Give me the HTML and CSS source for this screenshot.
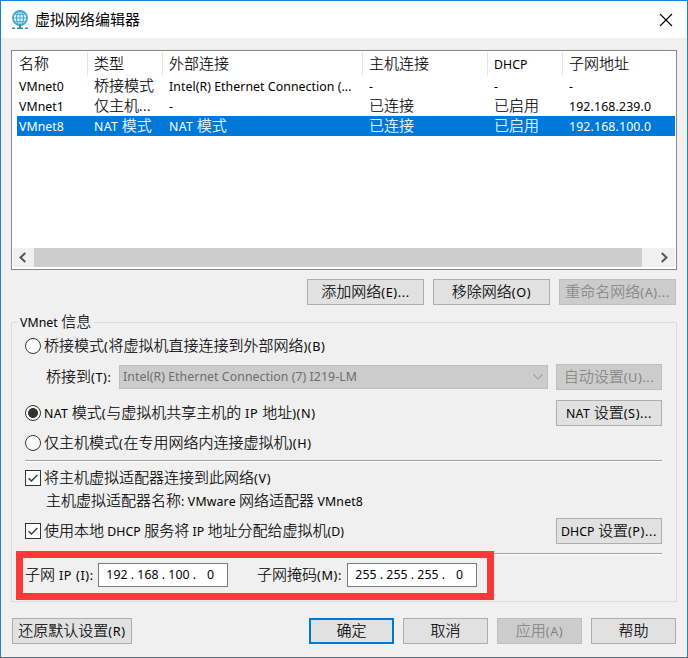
FILE: index.html
```html
<!DOCTYPE html>
<html lang="zh-CN">
<head>
<meta charset="utf-8">
<title>虚拟网络编辑器</title>
<link rel="stylesheet" href="styles.css">
</head>
<body>
<main class="window">
  <header class="titlebar">
    <svg class="app-icon" width="18" height="20" viewBox="0 0 18 20" fill="none">
      <circle cx="9" cy="8" r="7.1" fill="#e9f7fc" stroke="#41aad0" stroke-width="1.8"/>
      <ellipse cx="9" cy="8" rx="3.5" ry="7.2" stroke="#41aad0" stroke-width="1.2"/>
      <path d="M9 1v14M2 8h14M3 4.3h12M3 11.7h12" stroke="#41aad0" stroke-width="1"/>
      <path d="M9 15v3" stroke="#3c8d8c" stroke-width="2"/>
      <path d="M1 18.3h3M6 18.3h6M14 18.3h3" stroke="#3c8d8c" stroke-width="1.5"/>
    </svg>
    <h1 class="title">虚拟网络编辑器</h1>
    <svg class="close" width="14" height="14" viewBox="0 0 14 14"><path d="M1 1l12 12M13 1L1 13" stroke="#000" stroke-width="1.1"/></svg>
  </header>

  <section class="list">
    <div class="row head"><span>名称</span><span>类型</span><span>外部连接</span><span>主机连接</span><span><i>DHCP</i></span><span>子网地址</span></div>
    <div class="row"><span><i>VMnet0</i></span><span>桥接模式</span><span><i>Intel(R) Ethernet Connection (...</i></span><span><i>-</i></span><span><i>-</i></span><span><i>-</i></span></div>
    <div class="row"><span><i>VMnet1</i></span><span>仅主机<i class="key">...</i></span><span><i>-</i></span><span>已连接</span><span>已启用</span><span><i class="addr">192.168.239.0</i></span></div>
    <div class="row selected"><span><i>VMnet8</i></span><span><i class="nat-word">NAT </i>模式</span><span><i class="nat-word">NAT </i>模式</span><span>已连接</span><span>已启用</span><span><i class="addr">192.168.100.0</i></span></div>
    <div class="scrollbar">
      <svg width="21" height="19" viewBox="0 0 21 19"><path d="M12.3 5L7.5 9.5l4.8 4.5" fill="none" stroke="#555" stroke-width="2"/></svg>
      <div class="thumb"></div>
      <svg width="33" height="19" viewBox="0 0 33 19"><path d="M19.7 5l4.8 4.5-4.8 4.5" fill="none" stroke="#555" stroke-width="2"/></svg>
    </div>
  </section>

  <div class="actions">
    <button class="btn">添加网络<i class="key">(E)...</i></button>
    <button class="btn">移除网络<i class="key">(O)</i></button>
    <button class="btn" disabled>重命名网络<i class="key">(A)...</i></button>
  </div>

  <section class="group">
    <div class="legend"><i>VMnet </i>信息</div>
    <div class="line bridge"><span class="radio"></span><span>桥接模式<i class="key">(</i>将虚拟机直接连接到外部网络<i class="key">)(B)</i></span></div>
    <div class="line adapter">
      <span class="adapter-label">桥接到<i class="key">(T):</i></span>
      <div class="combo"><i>Intel(R) Ethernet Connection (7) I219-LM</i>
        <svg width="12" height="8" viewBox="0 0 12 8"><path d="M1.5 1.5L6 6l4.500-4.500" fill="none" stroke="#a0a0a0" stroke-width="1.1"/></svg></div>
      <button class="btn side" disabled>自动设置<i class="key">(U)...</i></button>
    </div>
    <div class="line nat"><span class="radio on"></span><span><i class="nat-word">NAT </i>模式<i class="key">(</i>与虚拟机共享主机的<i class="key"> IP </i>地址<i class="key">)(N)</i></span><button class="btn side"><i class="nat-word">NAT </i>设置<i class="key">(S)...</i></button></div>
    <div class="line host"><span class="radio"></span><span>仅主机模式<i class="key">(</i>在专用网络内连接虚拟机<i class="key">)(H)</i></span></div>
    <div class="rule rule-a"></div>
    <div class="line connect"><svg class="check" viewBox="0 0 16 16"><path d="M3 8.200l3.200 3.200L13 4.600"/></svg><span>将主机虚拟适配器连接到此网络<i class="key">(V)</i></span></div>
    <div class="line name"><span>主机虚拟适配器名称<i class="vendor">: VMware </i>网络适配器<i class="vendor"> VMnet8</i></span></div>
    <div class="line dhcp"><svg class="check" viewBox="0 0 16 16"><path d="M3 8.200l3.200 3.200L13 4.600"/></svg><span>使用本地<i> DHCP </i>服务将<i> IP </i>地址分配给虚拟机<i>(D)</i></span><button class="btn side"><i>DHCP </i>设置<i class="key">(P)...</i></button></div>
    <div class="rule rule-b"></div>
    <div class="line subnet">
      <span class="ip-label">子网<i class="key"> IP (I):</i></span>
      <div class="ip"><b>192</b><em>.</em><b>168</b><em>.</em><b>100</b><em>.</em><b>0</b></div>
      <span class="mask-label">子网掩码<i class="key">(M):</i></span>
      <div class="ip"><b>255</b><em>.</em><b>255</b><em>.</em><b>255</b><em>.</em><b>0</b></div>
    </div>
    <div class="highlight"></div>
  </section>

  <footer class="footer">
    <button class="btn restore">还原默认设置<i class="key">(R)</i></button>
    <button class="btn primary">确定</button>
    <button class="btn">取消</button>
    <button class="btn" disabled>应用<i class="key">(A)</i></button>
    <button class="btn">帮助</button>
  </footer>
</main>
</body>
</html>
```
FILE: styles.css
```css
* { box-sizing: border-box; }
body { margin: 0; }
.window {
  width: 688px; height: 658px; border: 1px solid #1883d7; background: #f0f0f0;
  font: 300 15px/20px "Noto Sans CJK SC", sans-serif; color: #000; overflow: hidden;
  -webkit-text-stroke: 0.15px currentColor;
}
i, b, em { font: 400 12.3px/18px "Noto Sans", sans-serif; white-space: pre; letter-spacing: 0.07px; -webkit-text-stroke: 0; }
.key { font-size: 12.7px; letter-spacing: 0.6px; }
.nat-word { letter-spacing: 0.35px; }
.addr { letter-spacing: 0.15px; }
.vendor { letter-spacing: 0.17px; }
.titlebar { height: 37px; background: #fff; display: flex; align-items: center; padding: 0 14px 0 10px; }
.app-icon { margin-right: 6px; }
.title { margin: 0 0 2px; font: 400 15px/20px "Noto Sans CJK SC", sans-serif; flex: 1; -webkit-text-stroke: 0; }

.list {
  margin: 12px 10px 0; width: 666px; height: 220px; border: 1px solid #828790; background: #fff;
  padding: 1px 1px 2px 1px; display: flex; flex-direction: column;
}
.row { display: grid; grid-template-columns: 71px 75px 200px 125px 75px 1fr; height: 20px; margin-left: 4px; }
.row span { padding-left: 2px; white-space: nowrap; height: 20px; line-height: 18px; }
.row span + span { padding-left: 6px; }
.row.head { height: 24px; }
.row.head span { height: 24px; line-height: 21px; border-right: 1px solid #e5e5e5; }
.row.head span:last-child { border: 0; }
.selected { background: #0078d7; color: #fff; }
.scrollbar { margin-top: auto; height: 19px; display: flex; background: #f0f0f0; }
.thumb { flex: 1; background: #cdcdcd; }

.btn {
  height: 26px; padding: 0 0 2px; border: 1px solid #adadad; background: #e1e1e1; color: #000;
  font: 300 15px/20px "Noto Sans CJK SC", sans-serif; white-space: nowrap;
  -webkit-text-stroke: 0.15px currentColor;
}
.btn:disabled { background: #ccc; border-color: #bfbfbf; color: #838383; }
.actions { display: flex; justify-content: flex-end; gap: 9px; margin: 9px 11px 0 0; }
.actions .btn { width: 117px; }

.group { position: relative; margin: 17px 10px 0; width: 666px; height: 280px; border: 1px solid #dcdcdc; padding: 0 14px 0 13px; }
.legend { width: max-content; height: 20px; line-height: 18px; margin: -11px 0 0 -7px; padding: 0 3px 0 2px; background: #f0f0f0; }
.line { display: flex; align-items: center; height: 24px; white-space: nowrap; }
.line > span { padding-bottom: 2px; }
.radio { width: 16px; height: 16px; border: 1px solid #333; border-radius: 50%; background: #fff; margin-right: 3px; flex: none; }
.radio.on { background: radial-gradient(circle, #333 4.600px, #fff 5.300px) border-box; }
.bridge { margin-top: 2px; }
.adapter { height: 26px; margin-top: 6px; padding-left: 21px; }
.adapter-label { width: 73px; }
.combo { width: 429px; height: 24px; border: 1px solid #bfbfbf; background: #ccc; color: #6d6d6d; display: flex; align-items: center; justify-content: space-between; padding: 0 3px; }
.side { width: 106px; margin-left: auto; flex: none; }
.nat { height: 26px; margin-top: 10px; }
.host { margin-top: 5px; }
.rule { height: 2px; background: #a0a0a0; border-bottom: 1px solid #fff; }
.rule-a { margin-top: 5px; }
.connect { margin-top: 4px; }
.check { width: 16px; height: 16px; border: 1px solid #333; background: #fff; margin-right: 3px; flex: none; }
.check path { fill: none; stroke: #333; stroke-width: 1.5; }
.name { height: 22px; padding-left: 21px; }
.dhcp { height: 26px; margin-top: 6px; }
.rule-b { margin-top: 9px; }
.subnet { margin-top: 8px; }
.ip-label { width: 73px; }
.mask-label { width: 119px; padding-left: 29px; }
.ip { width: 130px; height: 24px; border: 1px solid #7a7a7a; background: #fff; display: grid; grid-template-columns: 24px 7px 24px 7px 24px 7px 16px; padding: 2px 0 0 6px; text-align: center; }
.ip b:last-child { text-align: right; }
.highlight { position: absolute; left: 4px; top: 228px; width: 478px; height: 49px; border: 7px solid #fc3838; }

.footer { display: flex; gap: 9px; margin: 16px 11px 0; }
.footer .btn { width: 85px; }
.footer .restore { width: 120px; margin-right: auto; }
.footer .primary { border: 2px solid #0078d7; }
```
